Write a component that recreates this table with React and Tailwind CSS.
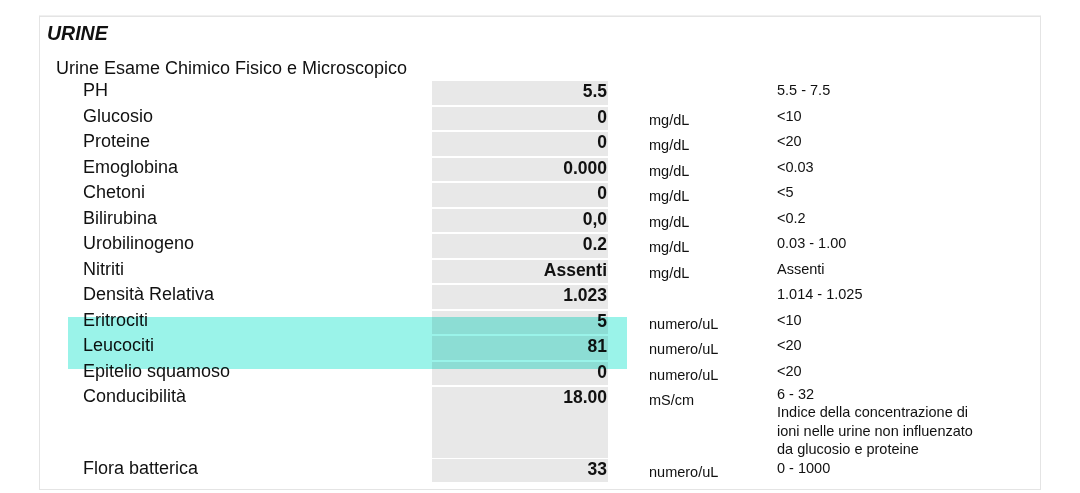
const rows = [
  { name: 'PH', value: '5.5', unit: '', ref: '5.5 - 7.5' },
  { name: 'Glucosio', value: '0', unit: 'mg/dL', ref: '<10' },
  { name: 'Proteine', value: '0', unit: 'mg/dL', ref: '<20' },
  { name: 'Emoglobina', value: '0.000', unit: 'mg/dL', ref: '<0.03' },
  { name: 'Chetoni', value: '0', unit: 'mg/dL', ref: '<5' },
  { name: 'Bilirubina', value: '0,0', unit: 'mg/dL', ref: '<0.2' },
  { name: 'Urobilinogeno', value: '0.2', unit: 'mg/dL', ref: '0.03 - 1.00' },
  { name: 'Nitriti', value: 'Assenti', unit: 'mg/dL', ref: 'Assenti' },
  { name: 'Densità Relativa', value: '1.023', unit: '', ref: '1.014 - 1.025' },
  { name: 'Eritrociti', value: '5', unit: 'numero/uL', ref: '<10' },
  { name: 'Leucociti', value: '81', unit: 'numero/uL', ref: '<20' },
  { name: 'Epitelio squamoso', value: '0', unit: 'numero/uL', ref: '<20' },
];

const Row = ({ r, tall }) => (
  <div className={`grid grid-cols-[376px_176px_169px_1fr] mt-[2px] ${tall ? 'h-[70px]' : r.last ? 'h-[23px]' : 'h-[23.5px]'}`}>
    <div className="pl-[27px] text-[18px] leading-[18px] text-[#111] whitespace-nowrap">{r.name}</div>
    <div className="bg-[#e8e8e8] text-right pr-[1px] text-[17.5px] leading-[20px] font-bold text-[#111]">{r.value}</div>
    <div className="pl-[41px] pt-[4px] text-[14.5px] leading-[18px] text-[#111]">{r.unit}</div>
    <div className={`text-[14.5px] text-[#111] whitespace-nowrap ${tall ? 'leading-[18.3px] -mt-[2px]' : 'leading-[18px]'}`}>
      {r.ref}
    </div>
  </div>
);

export default function App() {
  return (
    <div className="w-[1080px] h-[493px] bg-white pt-[16px] pl-[39px] font-['Liberation_Sans',Arial,sans-serif]">
      <div className="relative w-[1002px] h-[474px] border border-[#e4e4e4] shadow-[0_-1px_0_#f0f0f0]">
        <div className="pl-[7px] pt-[5px] text-[19.5px] leading-[22px] font-bold italic text-[#111]">URINE</div>
        <div className="pl-[16px] mt-[15px] text-[18px] leading-[18px] text-[#111]">
          Urine Esame Chimico Fisico e Microscopico
        </div>
        <div className="pl-[16px] mt-[4px]">
          {rows.map((r) => (
            <Row key={r.name} r={r} />
          ))}
          <Row
            tall
            r={{
              name: 'Conducibilità',
              value: '18.00',
              unit: 'mS/cm',
              ref: (
                <>
                  6 - 32
                  <br />
                  Indice della concentrazione di
                  <br />
                  ioni nelle urine non influenzato
                  <br />
                  da glucosio e proteine
                </>
              ),
            }}
          />
          <Row r={{ name: 'Flora batterica', value: '33', unit: 'numero/uL', ref: '0 - 1000', last: true }} />
        </div>
        <div className="absolute left-[28px] top-[300px] w-[559px] h-[52px] bg-[#9af3e9] mix-blend-multiply pointer-events-none" />
      </div>
    </div>
  );
}
